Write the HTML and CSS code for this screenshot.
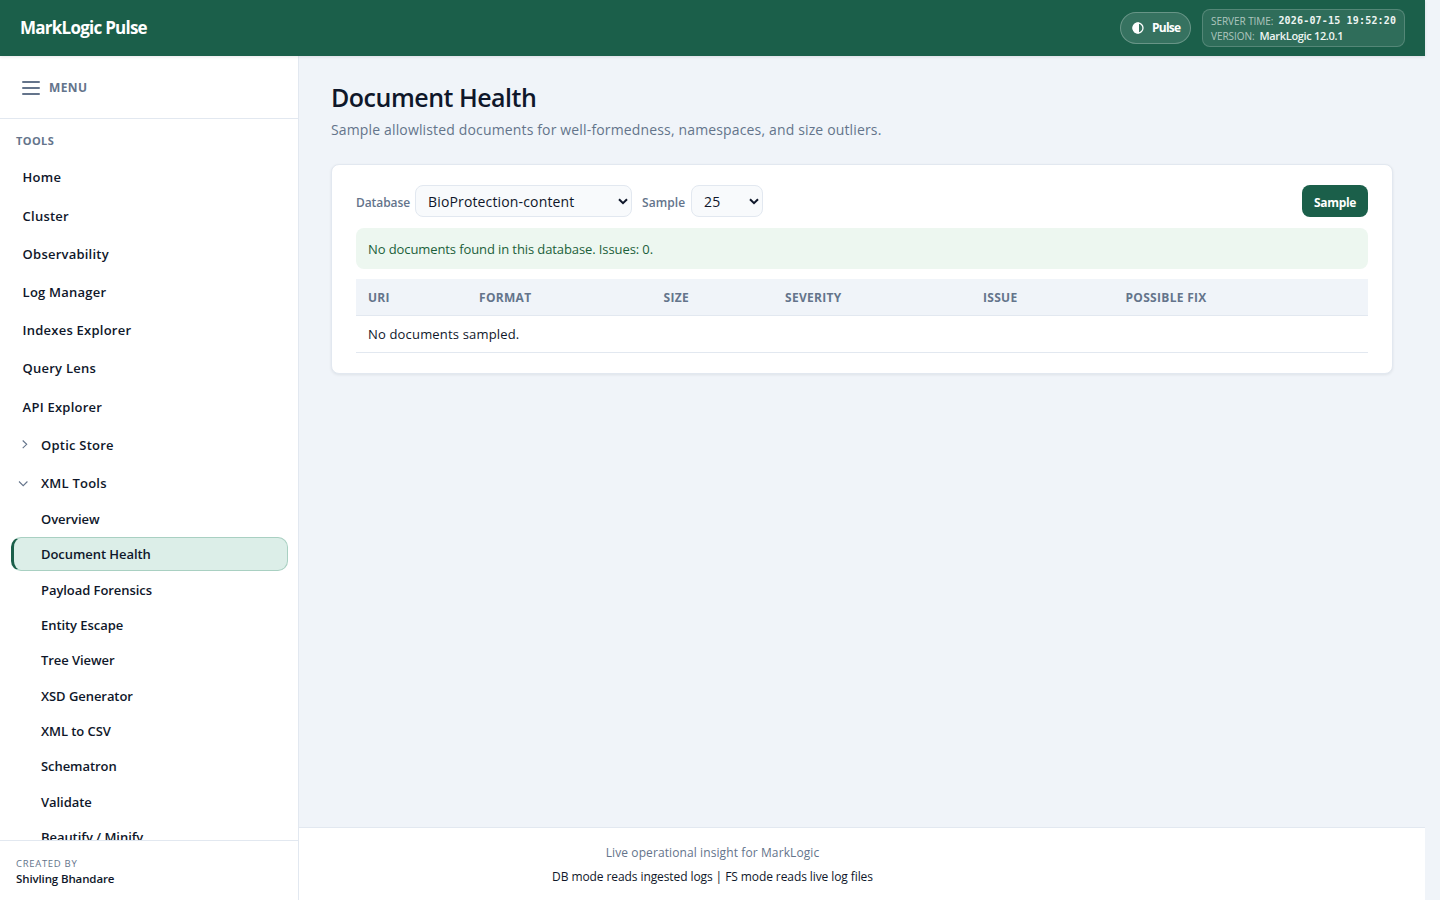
FILE: index.html
```html
<!DOCTYPE html>
<html lang="en">
<head>
<meta charset="utf-8">
<title>Document Health - MarkLogic Pulse</title>
<link rel="stylesheet" href="styles.css">
</head>
<body>
<div class="page">
  <header class="topbar">
    <div class="brand">MarkLogic Pulse</div>
    <div class="topbar-right">
      <button class="theme-btn" type="button">
        <svg class="theme-icon" viewBox="0 0 12 12" width="12" height="12"><circle cx="6" cy="6" r="5" fill="none" stroke="#fff" stroke-width="1.3"/><path d="M7 .6a5.500 5.500 0 1 0 0 10.800z" fill="#fff"/></svg>
        <span>Pulse</span>
      </button>
      <div class="server">
        <div class="server-row"><span class="server-key">SERVER TIME:</span><span class="server-time">2026-07-15 19:52:20</span></div>
        <div class="server-row"><span class="server-key">VERSION:</span><span class="server-version">MarkLogic 12.0.1</span></div>
      </div>
    </div>
  </header>
  <div class="body">
    <aside class="sidebar">
      <div class="menu-toggle">
        <span class="burger"><i></i><i></i><i></i></span>
        <span class="menu-label">MENU</span>
      </div>
      <nav class="nav">
        <div class="nav-heading">TOOLS</div>
        <a class="item">Home</a>
        <a class="item">Cluster</a>
        <a class="item">Observability</a>
        <a class="item">Log Manager</a>
        <a class="item">Indexes Explorer</a>
        <a class="item">Query Lens</a>
        <a class="item">API Explorer</a>
        <a class="item group"><svg class="chev" viewBox="0 0 10 10" width="10" height="10"><path d="M4.700 0.500l4 3.800-4 3.800"/></svg>Optic Store</a>
        <a class="item group"><svg class="chev" viewBox="0 0 10 10" width="10" height="10"><path d="M1 3.500l4.200 4.200L9.400 3.500"/></svg>XML Tools</a>
        <div class="subs">
          <a class="sub">Overview</a>
          <a class="sub active">Document Health</a>
          <a class="sub">Payload Forensics</a>
          <a class="sub">Entity Escape</a>
          <a class="sub">Tree Viewer</a>
          <a class="sub">XSD Generator</a>
          <a class="sub">XML to CSV</a>
          <a class="sub">Schematron</a>
          <a class="sub">Validate</a>
          <a class="sub">Beautify / Minify</a>
        </div>
      </nav>
      <div class="credit">
        <div class="credit-label">CREATED BY</div>
        <div class="credit-name">Shivling Bhandare</div>
      </div>
    </aside>
    <div class="content">
      <main class="main">
        <h1 class="title">Document Health</h1>
        <p class="subtitle">Sample allowlisted documents for well-formedness, namespaces, and size outliers.</p>
        <section class="card">
          <div class="toolbar">
            <label class="label">Database</label>
            <div class="select select-db"><span>BioProtection-content</span><svg class="caret" viewBox="0 0 10 7" width="10" height="7"><path d="M1 1.200l4 4 4-4"/></svg></div>
            <label class="label label-sample">Sample</label>
            <div class="select select-num"><span>25</span><svg class="caret" viewBox="0 0 10 7" width="10" height="7"><path d="M1 1.200l4 4 4-4"/></svg></div>
            <button class="primary" type="button">Sample</button>
          </div>
          <div class="notice"><span>No documents found in this database. Issues: 0.</span></div>
          <table class="table">
            <colgroup><col class="c1"><col class="c2"><col class="c3"><col class="c4"><col class="c5"><col class="c6"></colgroup>
            <thead><tr><th>URI</th><th>FORMAT</th><th>SIZE</th><th>SEVERITY</th><th>ISSUE</th><th>POSSIBLE FIX</th></tr></thead>
            <tbody><tr><td colspan="6">No documents sampled.</td></tr></tbody>
          </table>
        </section>
      </main>
      <footer class="footer">
        <div class="foot-top">Live operational insight for MarkLogic</div>
        <div class="foot-note">DB mode reads ingested logs | FS mode reads live log files</div>
      </footer>
    </div>
  </div>
</div>
</body>
</html>
```
FILE: styles.css
```css
* { box-sizing: border-box; }
body {
  margin: 0;
  height: 900px;
  overflow: hidden;
  background: #f0f4f9;
  color: #0f172a;
  font-family: "Open Sans", "Noto Sans", sans-serif;
}
.page { width: 1425px; height: 900px; display: flex; flex-direction: column; }
.topbar {
  height: 56px; flex: none; position: relative; z-index: 1;
  display: flex; align-items: center; justify-content: space-between;
  padding: 0 20px; background: #1b5f4a; color: #fff;
  box-shadow: 0 1px 3px rgba(15, 23, 42, .1);
}
.brand { padding-bottom: 1px; font-size: 17px; font-weight: 700; letter-spacing: -.75px; }
.topbar-right { display: flex; align-items: center; gap: 11px; }
.theme-btn {
  width: 71px; height: 32px; display: flex; align-items: center; gap: 8px;
  padding: 0 0 1px 11px; border: 1px solid rgba(255, 255, 255, .25); border-radius: 16px;
  background: rgba(255, 255, 255, .12); color: #fff;
  font: 700 12px "Open Sans", sans-serif; letter-spacing: -.75px;
}
.theme-icon { flex: none; }
.server {
  width: 203px; height: 38px; padding: 4px 8px; border-radius: 8px;
  border: 1px solid rgba(255, 255, 255, .18); background: rgba(255, 255, 255, .09);
}
.server-row { height: 14.5px; display: flex; align-items: center; gap: 5px; white-space: nowrap; }
.server-key { font-size: 10px; font-weight: 500; letter-spacing: -.05px; color: rgba(255, 255, 255, .62); }
.server-time { padding-bottom: 1px; font: 700 10px "DejaVu Sans Mono", monospace; letter-spacing: .18px; color: #eef5f2; }
.server-version { font-size: 11px; font-weight: 600; letter-spacing: -.33px; color: #eef5f2; }
.body { flex: 1; min-height: 0; display: flex; }
.sidebar {
  width: 299px; flex: none; display: flex; flex-direction: column;
  background: #fff; border-right: 1px solid #e2e8f0;
}
.menu-toggle {
  height: 63px; flex: none; display: flex; align-items: center; gap: 9px;
  padding: 1px 0 0 22px; border-bottom: 1px solid #e2e8f0; color: #64748b;
}
.burger { width: 18px; display: flex; flex-direction: column; gap: 4px; }
.burger i { height: 2px; border-radius: 1px; background: #64748b; }
.menu-label { font-size: 12px; font-weight: 700; letter-spacing: .4px; }
.nav { flex: 1; min-height: 0; overflow: hidden; padding: 0 10px; }
.nav-heading { height: 40.4px; padding: 14px 0 0 6px; line-height: 16px; font-size: 11px; font-weight: 700; letter-spacing: .4px; color: #64748b; }
.item, .sub {
  display: flex; align-items: center; margin-bottom: 2px; border-radius: 10px;
  font-size: 13px; font-weight: 600; white-space: nowrap;
}
.item { height: 36.2px; padding-left: 12.6px; letter-spacing: .23px; }
.subs { margin-top: -.8px; }
.sub { height: 33.35px; padding-left: 31px; letter-spacing: -.06px; }
.group { padding-left: 8px; gap: 13px; }
.chev { fill: none; stroke: #64748b; stroke-width: 1.1; }
.sub.active {
  height: 34px; margin: -.65px 0 2px 1px; padding-left: 27px;
  background: #dceee8; border: 1px solid #a9d0c2; border-left: 3px solid #1b5f4a;
}
.credit { height: 60px; flex: none; padding: 16px 16px 0; border-top: 1px solid #e2e8f0; }
.credit-label { font-size: 9.5px; line-height: 14px; letter-spacing: .7px; color: #64748b; }
.credit-name { font-size: 11.5px; line-height: 16px; font-weight: 600; letter-spacing: -.12px; }
.content { flex: 1; min-width: 0; display: flex; flex-direction: column; }
.main { flex: 1; padding: 24px 32px 0; }
.title { margin: 0; font-size: 25px; line-height: 34px; font-weight: 600; letter-spacing: -.5px; }
.subtitle { margin: 5px 0 0; font-size: 14px; line-height: 22px; letter-spacing: .15px; color: #64748b; white-space: nowrap; }
.card {
  width: 1062px; height: 210px; margin-top: 23px; padding: 20px 24px;
  background: #fff; border: 1px solid #e2e8f0; border-radius: 8px;
  box-shadow: 0 1px 3px rgba(15, 23, 42, .08);
}
.toolbar { height: 32px; display: flex; align-items: center; }
.label { width: 59px; padding-top: 2px; font-size: 12px; font-weight: 600; letter-spacing: -.08px; color: #64748b; }
.label-sample { width: 49px; margin-left: 10px; letter-spacing: .08px; }
.select {
  height: 32px; display: flex; align-items: center; justify-content: space-between;
  padding: 0 3px 0 12px; border: 1px solid #e2e8f0; border-radius: 8px; background: #f8fafc;
  font-size: 14px; letter-spacing: .15px;
}
.select-db { width: 217px; }
.select-num { width: 72px; }
.caret { fill: none; stroke: #0f172a; stroke-width: 2; }
.primary {
  width: 66px; height: 32px; margin-left: auto; padding: 2px 0 0; border: 0; border-radius: 8px;
  background: #1b5f4a; color: #fff; font: 700 12px "Open Sans", sans-serif; letter-spacing: -.3px;
}
.notice {
  height: 41px; margin-top: 11px; padding: 0 12px; display: flex; align-items: center;
  border-radius: 8px; background: #edf7f0; color: #1b5f3a; font-size: 13px; letter-spacing: -.1px;
}
.table { width: 100%; margin-top: 10px; border-collapse: separate; border-spacing: 0; table-layout: fixed; text-align: left; }
.c1 { width: 111px; } .c2 { width: 184.5px; } .c3 { width: 121.5px; } .c4 { width: 198px; } .c5 { width: 142.5px; } .c6 { width: 254.5px; }
.table th { height: 37px; padding: 0 12px; background: #f0f4f9; border-bottom: 1px solid #e2e8f0; font-size: 12px; font-weight: 700; letter-spacing: .3px; color: #64748b; }
.table td { height: 37px; padding: 0 12px; border-bottom: 1px solid #e2e8f0; font-size: 13px; letter-spacing: .17px; }
.footer { height: 73px; flex: none; padding: 15px 299px 0 0; background: #fff; border-top: 1px solid #e2e8f0; text-align: center; }
.foot-top { font-size: 12px; line-height: 20px; letter-spacing: .1px; color: #64748b; }
.foot-note { margin-top: 4px; font-size: 12px; line-height: 20px; letter-spacing: -.09px; }
```
